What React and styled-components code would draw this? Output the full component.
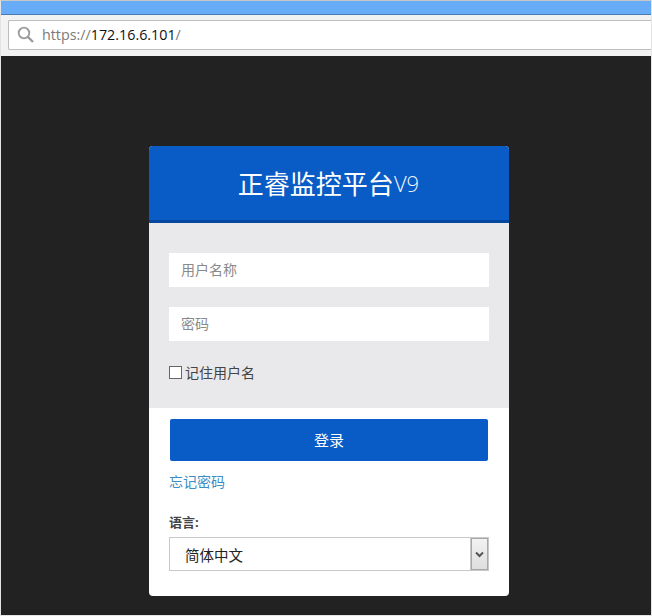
import styled, { createGlobalStyle } from "styled-components";

const Global = createGlobalStyle`
  html, body {
    margin: 0;
    padding: 0;
    background: #222222;
  }
  * {
    box-sizing: border-box;
  }
`;

const FONT = `"Open Sans", "Noto Sans CJK SC", sans-serif`;

const Window = styled.div`
  width: 652px;
  height: 616px;
  display: flex;
  flex-direction: column;
  border-top: 1px solid #c8c8c8;
  border-left: 1px solid #e4e4e4;
  border-right: 1px solid #e4e4e4;
  border-bottom: 1px solid #e4e4e4;
  overflow: hidden;
  font-family: ${FONT};
`;

const TitleBar = styled.div`
  height: 14px;
  flex: none;
  background: #68acf8;
  border-bottom: 1px solid #4a7bb0;
`;

const Toolbar = styled.div`
  height: 41px;
  flex: none;
  background: #f2f2f2;
  padding: 5px 0 6px 7px;
`;

const UrlBox = styled.div`
  height: 30px;
  display: flex;
  align-items: center;
  gap: 7px;
  padding-left: 8px;
  background: #fff;
  border: 1px solid #bdbdbd;
  border-right: none;
  border-radius: 2px 0 0 2px;
  font-family: "Open Sans", sans-serif;
  font-size: 14.3px;
  color: #7b7b7b;
`;

const UrlText = styled.span`
  margin-top: -2px;
`;

const Host = styled.span`
  color: #111;
`;

const Stage = styled.div`
  flex: 1;
  background: #222222;
  padding: 90px 0 0 148px;
`;

const Card = styled.div`
  width: 360px;
  height: 450px;
  background: #fff;
  border-radius: 4px;
  overflow: hidden;
`;

const Header = styled.div`
  height: 77px;
  padding-right: 1px;
  background: #095cc5;
  border-bottom: 3px solid #05489e;
  display: flex;
  align-items: center;
  justify-content: center;
  color: #fff;
  font-size: 26px;
  font-weight: 400;
`;

const Version = styled.span`
  font-size: 22px;
  font-weight: 300;
  color: #eef4fc;
`;

const FormArea = styled.div`
  height: 185px;
  background: #e9e9eb;
  padding: 30px 20px 0;
  display: flex;
  flex-direction: column;
  gap: 20px;
`;

const TextInput = styled.input`
  width: 320px;
  height: 34px;
  padding: 0 12px 2px;
  border: none;
  outline: none;
  background: #fff;
  font-family: ${FONT};
  font-size: 14px;
  &::placeholder {
    color: #8a8a8a;
    opacity: 1;
  }
`;

const Remember = styled.label`
  display: flex;
  align-items: center;
  gap: 3px;
  margin-top: 1px;
  font-size: 14px;
  color: #444;
`;

const Check = styled.input`
  width: 13px;
  height: 13px;
  margin: 0;
  appearance: none;
  background: #fff;
  border: 1px solid #666;
`;

const Actions = styled.div`
  padding: 11px 20px 0;
`;

const LoginButton = styled.button`
  display: block;
  width: 318px;
  height: 42px;
  margin-left: 1px;
  padding: 0 0 2px;
  border: none;
  border-radius: 2px;
  background: #095cc5;
  color: #fff;
  font-family: ${FONT};
  font-size: 15px;
`;

const ForgotLink = styled.a`
  display: block;
  margin-top: 11px;
  font-size: 14px;
  line-height: 19px;
  color: #3a8dc5;
`;

const LangLabel = styled.div`
  margin-top: 22px;
  font-size: 13px;
  line-height: 18px;
  font-weight: 700;
  color: #444;
`;

const SelectBox = styled.div`
  width: 320px;
  height: 34px;
  margin-top: 6px;
  display: flex;
  align-items: center;
  justify-content: space-between;
  padding-left: 15px;
  background: #fff;
  border: 1px solid #c8c8c8;
  font-size: 14.5px;
  color: #222;
`;

const SelectArrow = styled.div`
  width: 17px;
  height: 32px;
  display: flex;
  align-items: center;
  justify-content: center;
  background: linear-gradient(#f2f2f2, #dedede);
  border: 1px solid #a8a8a8;
  outline: 1px solid #c8c8c8;
`;

const SearchIcon = () => (
  <svg width="18" height="18" viewBox="0 0 18 18" fill="none" stroke="#9a9a9a">
    <circle cx="7" cy="7" r="5.3" strokeWidth="1.8" />
    <path d="M11 11 L16 16" strokeWidth="2.4" />
  </svg>
);

const App = () => {
  return (
    <>
      <Global />
      <Window>
        <TitleBar />
        <Toolbar>
          <UrlBox>
            <SearchIcon />
            <UrlText>
              https://<Host>172.16.6.101</Host>/
            </UrlText>
          </UrlBox>
        </Toolbar>
        <Stage>
          <Card>
            <Header>
              正睿监控平台<Version>V9</Version>
            </Header>
            <FormArea>
              <TextInput placeholder="用户名称" />
              <TextInput placeholder="密码" />
              <Remember>
                <Check type="checkbox" />
                记住用户名
              </Remember>
            </FormArea>
            <Actions>
              <LoginButton>登录</LoginButton>
              <ForgotLink>忘记密码</ForgotLink>
              <LangLabel>语言:</LangLabel>
              <SelectBox>
                简体中文
                <SelectArrow>
                  <svg width="9" height="7" viewBox="0 0 9 7" fill="none" stroke="#555" strokeWidth="2">
                    <path d="M1 1.5 L4.5 5 L8 1.5" />
                  </svg>
                </SelectArrow>
              </SelectBox>
            </Actions>
          </Card>
        </Stage>
      </Window>
    </>
  );
};

export default App;
